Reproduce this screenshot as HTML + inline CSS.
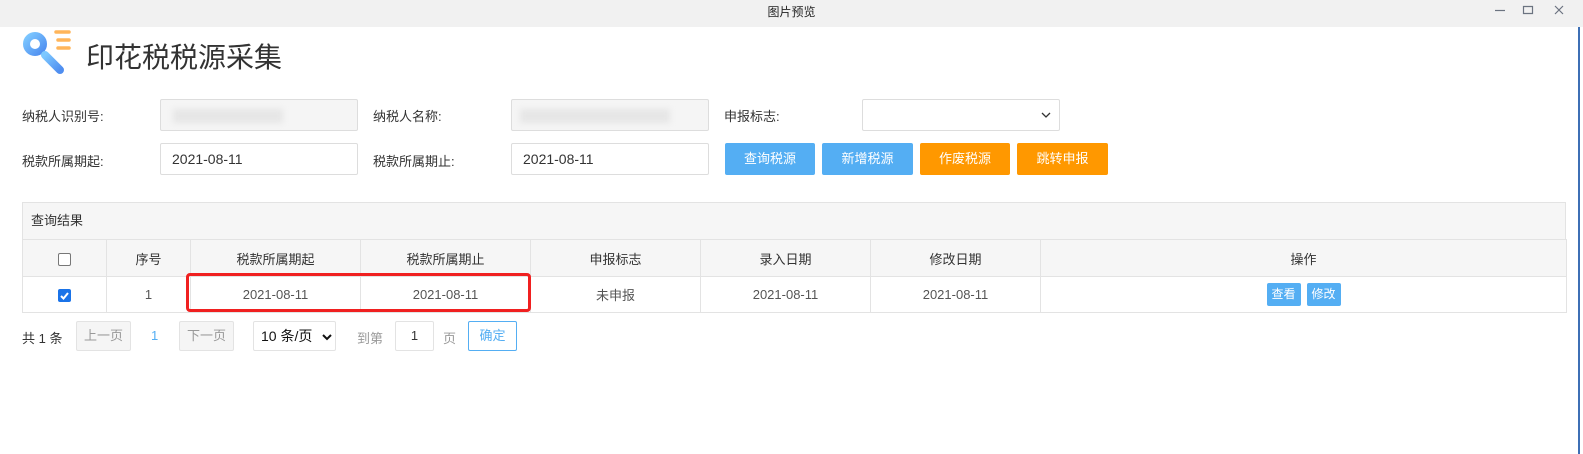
<!DOCTYPE html>
<html><head><meta charset="utf-8"><style>
*{box-sizing:border-box;margin:0;padding:0}
body{width:1583px;height:454px;background:#fff;font-family:"Liberation Sans","Noto Sans CJK SC",sans-serif;font-size:13px;color:#333;position:relative;overflow:hidden}
.abs{position:absolute}
.tb{left:0;top:0;width:1583px;height:27px;background:#f1f1f1;text-align:center;font-size:12px;line-height:24px;color:#222}
.lbl{font-size:13px;color:#333}
.inp{border:1px solid #ddd;border-radius:2px;height:32px;background:#fff;padding-left:11px;line-height:30px;font-size:14px;color:#333}
.btn{height:32px;border-radius:2px;color:#fff;text-align:center;line-height:32px;font-size:13px}
.blue{background:#54aef3}.orange{background:#ff9800}
table{border-collapse:collapse;position:absolute;left:22px;top:239px}
td{border:1px solid #e3e3e3;text-align:center;font-size:13px;color:#555;height:36px}
thead td{background:#f6f6f6;color:#333;height:37px}
.sm{display:inline-block;background:#54aef3;color:#fff;font-size:12px;width:34px;height:23px;line-height:23px;border-radius:2px;margin:0 3px}
.pg{height:30px;border:1px solid #e3e3e3;border-radius:2px;line-height:28px;text-align:center;color:#999;font-size:13px}
.blur{position:absolute;top:9px;height:14px;background:#e6e6e6;filter:blur(3px)}
</style></head><body>
<div class="abs tb">图片预览</div>
<svg class="abs" style="left:1495px;top:4px" width="80" height="12" viewBox="0 0 80 12"><path d="M0 6.5H10" stroke="#6b7380" stroke-width="1.2"/><path d="M28.5 2.5h9v7h-9z" fill="none" stroke="#6b7380" stroke-width="1.2"/><path d="M60 2l8 8M68 2l-8 8" stroke="#6b7380" stroke-width="1.2"/></svg>
<div class="abs" style="left:1578px;top:27px;width:2px;height:427px;background:#3d6fb5"></div>
<svg class="abs" style="left:23px;top:29px" width="50" height="50" viewBox="0 0 50 50"><defs><linearGradient id="g" x1="0" y1="0" x2="1" y2="1"><stop offset="0" stop-color="#7dc8ff"/><stop offset="1" stop-color="#4f8ef0"/></linearGradient></defs><circle cx="12" cy="15" r="8.5" fill="none" stroke="url(#g)" stroke-width="7"/><path d="M22 26l15 15" stroke="url(#g)" stroke-width="8" stroke-linecap="round"/><path d="M33 3h13M35 11h11M35 19h11" stroke="#ffb55a" stroke-width="3.5" stroke-linecap="round"/></svg>
<div class="abs" style="left:86px;top:36px;font-size:28px;color:#333">印花税税源采集</div>
<div class="abs lbl" style="left:22px;top:106px">纳税人识别号:</div>
<div class="abs inp" style="left:160px;top:99px;width:198px;background:#f5f5f5"><div class="blur" style="left:12px;width:110px"></div></div>
<div class="abs lbl" style="left:373px;top:106px">纳税人名称:</div>
<div class="abs inp" style="left:511px;top:99px;width:198px;background:#f5f5f5"><div class="blur" style="left:8px;width:150px"></div></div>
<div class="abs lbl" style="left:724px;top:106px">申报标志:</div>
<div class="abs inp" style="left:862px;top:99px;width:198px"><svg class="abs" style="left:178px;top:12px" width="10" height="6"><path d="M1 1l4 4 4-4" fill="none" stroke="#333" stroke-width="1.3"/></svg></div>
<div class="abs lbl" style="left:22px;top:151px">税款所属期起:</div>
<div class="abs inp" style="left:160px;top:143px;width:198px">2021-08-11</div>
<div class="abs lbl" style="left:373px;top:151px">税款所属期止:</div>
<div class="abs inp" style="left:511px;top:143px;width:198px">2021-08-11</div>
<div class="abs btn blue" style="left:725px;top:143px;width:90px">查询税源</div>
<div class="abs btn blue" style="left:822px;top:143px;width:91px">新增税源</div>
<div class="abs btn orange" style="left:920px;top:143px;width:90px">作废税源</div>
<div class="abs btn orange" style="left:1017px;top:143px;width:91px">跳转申报</div>
<div class="abs" style="left:22px;top:202px;width:1544px;height:38px;background:#f6f6f6;border:1px solid #e3e3e3;border-bottom:none;padding-left:8px;line-height:36px;font-size:13px">查询结果</div>
<table>
<colgroup><col style="width:84px"><col style="width:84px"><col style="width:170px"><col style="width:170px"><col style="width:170px"><col style="width:170px"><col style="width:170px"><col style="width:526px"></colgroup>
<thead><tr><td><span style="display:inline-block;width:13px;height:13px;border:1px solid #777;border-radius:2px;vertical-align:middle;background:#fff"></span></td><td>序号</td><td>税款所属期起</td><td>税款所属期止</td><td>申报标志</td><td>录入日期</td><td>修改日期</td><td>操作</td></tr></thead>
<tbody><tr><td><span style="display:inline-block;width:13px;height:13px;border-radius:2px;background:#1a73e8;vertical-align:middle;position:relative"><svg style="position:absolute;left:1px;top:1px" width="11" height="11"><path d="M2 6l2.5 2.5L9 3" fill="none" stroke="#fff" stroke-width="2"/></svg></span></td><td>1</td><td>2021-08-11</td><td>2021-08-11</td><td>未申报</td><td>2021-08-11</td><td>2021-08-11</td><td><span class="sm">查看</span><span class="sm">修改</span></td></tr></tbody>
</table>
<div class="abs" style="left:186px;top:273px;width:345px;height:39px;border:3px solid #f02020;border-radius:4px"></div>
<div class="abs" style="left:22px;top:328px;font-size:13px">共 1 条</div>
<div class="abs pg" style="left:76px;top:321px;width:55px;background:#f5f5f5">上一页</div>
<div class="abs" style="left:151px;top:328px;color:#54aef3">1</div>
<div class="abs pg" style="left:179px;top:321px;width:55px;background:#f5f5f5">下一页</div>
<div class="abs pg" style="left:253px;top:321px;width:83px;color:#111;font-size:14px;text-align:left;padding-left:7px">10 条/页<svg class="abs" style="left:68px;top:12px" width="10" height="7"><path d="M1 1l4 4 4-4" fill="none" stroke="#111" stroke-width="2"/></svg></div>
<div class="abs" style="left:357px;top:328px;color:#999">到第</div>
<div class="abs pg" style="left:395px;top:321px;width:39px;color:#333">1</div>
<div class="abs" style="left:443px;top:328px;color:#999">页</div>
<div class="abs pg" style="left:468px;top:321px;width:49px;border-color:#54aef3;color:#54aef3;background:#fff">确定</div>
</body></html>
